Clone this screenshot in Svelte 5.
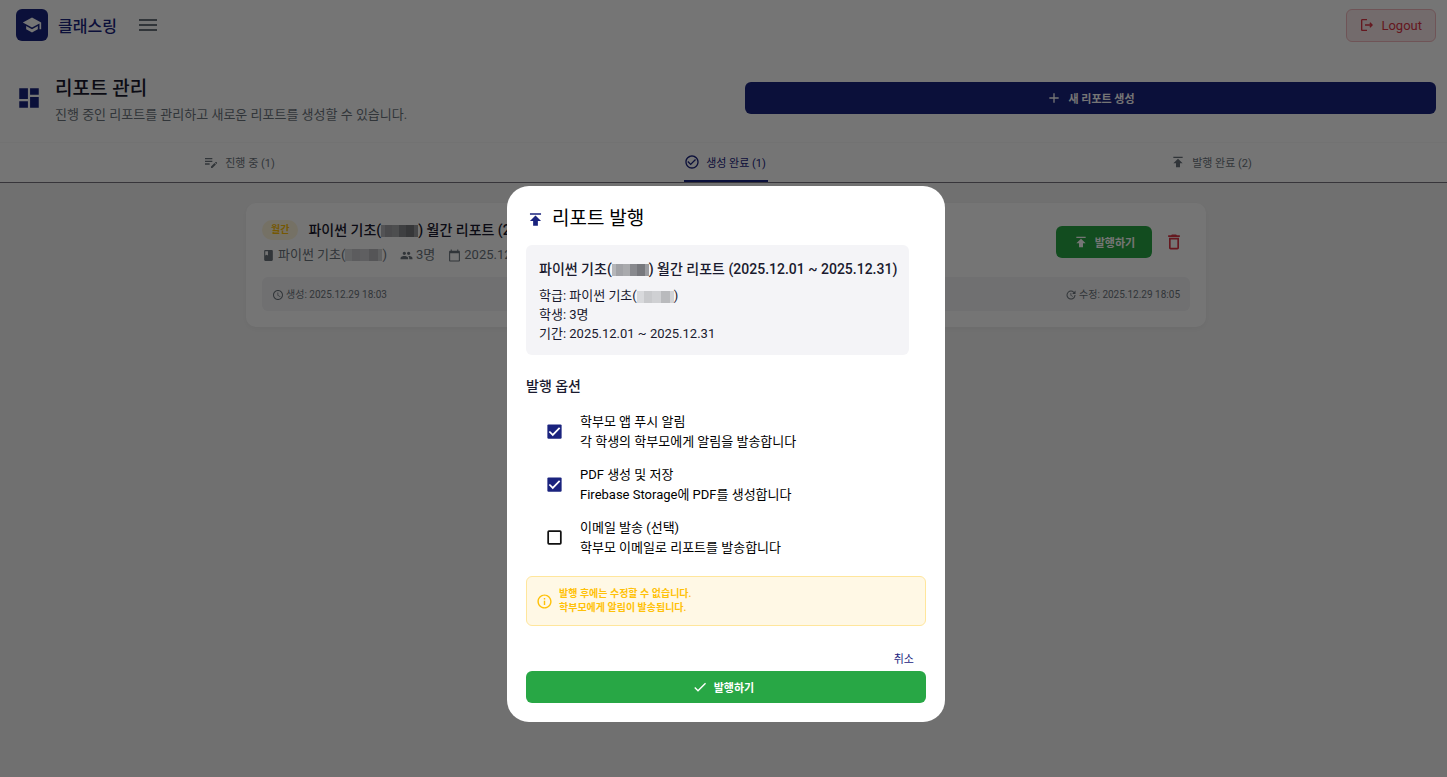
<script lang="ts">
	type Option = {
		id: string;
		title: string;
		description: string;
		checked: boolean;
	};

	const icons = {
		school: 'M5 13.18v4L12 21l7-3.82v-4L12 17l-7-3.82zM12 3L1 9l11 6 9-4.91V17h2V9L12 3z',
		menu: 'M3 18h18v-2H3v2zm0-5h18v-2H3v2zm0-7v2h18V6H3z',
		logout:
			'M17 8l-1.41 1.41L17.17 11H9v2h8.17l-1.58 1.58L17 16l4-4-4-4zM5 5h7V3H5c-1.1 0-2 .9-2 2v14c0 1.1.9 2 2 2h7v-2H5V5z',
		dashboard: 'M3 13h8V3H3v10zm0 8h8v-6H3v6zm10 0h8V11h-8v10zm0-18v6h8V3h-8z',
		add: 'M19 13h-6v6h-2v-6H5v-2h6V5h2v6h6v2z',
		editNote:
			'M3 10h11v2H3v-2zm0-2h11V6H3v2zm0 8h7v-2H3v2zm15.01-3.13.71-.71c.39-.39 1.02-.39 1.41 0l.71.71c.39.39.39 1.02 0 1.41l-.71.71-2.12-2.12zm-.71.71-5.3 5.3V21h2.12l5.3-5.3-2.12-2.12z',
		checkCircle:
			'M16.59 7.58L10 14.17l-3.59-3.58L5 12l5 5 8-8zM12 2C6.48 2 2 6.48 2 12s4.48 10 10 10 10-4.48 10-10S17.52 2 12 2zm0 18c-4.42 0-8-3.58-8-8s3.58-8 8-8 8 3.58 8 8-3.58 8-8 8z',
		publish: 'M5 4v2h14V4H5zm0 10h4v6h6v-6h4l-7-7-7 7z',
		book: 'M18 2H6c-1.1 0-2 .9-2 2v16c0 1.1.9 2 2 2h12c1.1 0 2-.9 2-2V4c0-1.1-.9-2-2-2zM6 4h5v8l-2.5-1.5L6 12V4z',
		people:
			'M16 11c1.66 0 2.99-1.34 2.99-3S17.66 5 16 5c-1.66 0-3 1.34-3 3s1.34 3 3 3zm-8 0c1.66 0 2.99-1.34 2.99-3S9.66 5 8 5C6.34 5 5 6.34 5 8s1.34 3 3 3zm0 2c-2.33 0-7 1.17-7 3.5V19h14v-2.5c0-2.33-4.67-3.5-7-3.5zm8 0c-.29 0-.62.02-.97.05 1.16.84 1.97 1.97 1.97 3.45V19h6v-2.5c0-2.33-4.67-3.5-7-3.5z',
		calendar:
			'M20 3h-1V1h-2v2H7V1H5v2H4c-1.1 0-2 .9-2 2v16c0 1.1.9 2 2 2h16c1.1 0 2-.9 2-2V5c0-1.1-.9-2-2-2zm0 18H4V8h16v13z',
		clock:
			'M11.99 2C6.47 2 2 6.48 2 12s4.47 10 9.99 10C17.52 22 22 17.52 22 12S17.52 2 11.99 2zM12 20c-4.42 0-8-3.58-8-8s3.58-8 8-8 8 3.58 8 8-3.58 8-8 8zm.5-13H11v6l5.25 3.15.75-1.23-4.5-2.67z',
		update:
			'M21 10.12h-6.78l2.74-2.82c-2.73-2.7-7.15-2.8-9.88-.1-2.73 2.71-2.73 7.08 0 9.79s7.15 2.71 9.88 0C18.32 15.65 19 14.08 19 12.1h2c0 1.98-.88 4.55-2.64 6.29-3.51 3.48-9.21 3.48-12.72 0-3.5-3.47-3.53-9.11-.02-12.58s9.14-3.47 12.65 0L21 3v7.12zM12.5 8v4.25l3.5 2.08-.72 1.21L11 13V8h1.5z',
		trash: 'M6 19c0 1.1.9 2 2 2h8c1.1 0 2-.9 2-2V7H6v12zM8 9h8v10H8V9zm7.5-5l-1-1h-5l-1 1H5v2h14V4z',
		info: 'M11 7h2v2h-2zm0 4h2v6h-2zm1-9C6.48 2 2 6.48 2 12s4.48 10 10 10 10-4.48 10-10S17.52 2 12 2zm0 18c-4.41 0-8-3.59-8-8s3.59-8 8-8 8 3.59 8 8-3.59 8-8 8z',
		check: 'M9 16.17L4.83 12l-1.42 1.41L9 19 21 7l-1.41-1.41z'
	};

	type IconName = keyof typeof icons;

	const tabs: { id: string; label: string; icon: IconName }[] = [
		{ id: 'progress', label: '진행 중 (1)', icon: 'editNote' },
		{ id: 'created', label: '생성 완료 (1)', icon: 'checkCircle' },
		{ id: 'published', label: '발행 완료 (2)', icon: 'publish' }
	];

	let activeTab = $state('created');

	let options: Option[] = $state([
		{
			id: 'push',
			title: '학부모 앱 푸시 알림',
			description: '각 학생의 학부모에게 알림을 발송합니다',
			checked: true
		},
		{
			id: 'pdf',
			title: 'PDF 생성 및 저장',
			description: 'Firebase Storage에 PDF를 생성합니다',
			checked: true
		},
		{
			id: 'email',
			title: '이메일 발송 (선택)',
			description: '학부모 이메일로 리포트를 발송합니다',
			checked: false
		}
	]);
</script>

{#snippet icon(name: IconName, size: number)}
	<svg width={size} height={size} viewBox="0 0 24 24" fill="currentColor" aria-hidden="true">
		<path d={icons[name]} />
	</svg>
{/snippet}

<div class="page">
	<header class="topbar">
		<span class="logo">{@render icon('school', 20)}</span>
		<span class="brand">클래스링</span>
		<button class="icon-button menu" aria-label="메뉴">{@render icon('menu', 24)}</button>
		<button class="logout">{@render icon('logout', 16)}Logout</button>
	</header>

	<section class="heading">
		<div class="heading-main">
			{@render icon('dashboard', 26)}
			<div class="heading-text">
				<h1>리포트 관리</h1>
				<p>진행 중인 리포트를 관리하고 새로운 리포트를 생성할 수 있습니다.</p>
			</div>
		</div>
		<button class="button create">{@render icon('add', 16)}새 리포트 생성</button>
	</section>

	<div class="tab-bar">
		<div class="tabs" role="tablist">
			{#each tabs as tab (tab.id)}
				<button
					class="tab"
					class:active={activeTab === tab.id}
					role="tab"
					aria-selected={activeTab === tab.id}
					onclick={() => (activeTab = tab.id)}
				>
					<span>{@render icon(tab.icon, 16)}{tab.label}</span>
				</button>
			{/each}
		</div>
	</div>

	<main>
		<article class="card">
			<div class="card-top">
				<div class="card-text">
					<div class="card-title">
						<span class="badge">월간</span>
						<h2>파이썬 기초(<i class="mask dark"></i>) 월간 리포트 (2025.12.01 ~ 2025.12.31)</h2>
					</div>
					<div class="meta">
						<span>{@render icon('book', 13)}파이썬 기초(<i class="mask"></i>)</span>
						<span>{@render icon('people', 13)}3명</span>
						<span>{@render icon('calendar', 13)}2025.12.01 ~ 2025.12.31</span>
					</div>
				</div>
				<button class="button publish">{@render icon('publish', 16)}발행하기</button>
				<button class="icon-button trash" aria-label="삭제">{@render icon('trash', 20)}</button>
			</div>
			<div class="dates">
				<span>{@render icon('clock', 12)}생성: 2025.12.29 18:03</span>
				<span>{@render icon('update', 12)}수정: 2025.12.29 18:05</span>
			</div>
		</article>
	</main>
</div>

<div class="overlay">
	<div class="dialog" role="dialog" aria-modal="true" aria-labelledby="dialog-title">
		<h2 id="dialog-title">{@render icon('publish', 19)}리포트 발행</h2>

		<div class="summary">
			<h3>파이썬 기초(<i class="mask dark"></i>) 월간 리포트 (2025.12.01 ~ 2025.12.31)</h3>
			<p>학급: 파이썬 기초(<i class="mask"></i>)</p>
			<p>학생: 3명</p>
			<p>기간: 2025.12.01 ~ 2025.12.31</p>
		</div>

		<fieldset>
			<legend>발행 옵션</legend>
			{#each options as option (option.id)}
				<label class="option">
					<input type="checkbox" bind:checked={option.checked} />
					<svg class="box" width="19" height="19" viewBox="0 0 24 24" aria-hidden="true">
						{#if option.checked}
							<rect x="3" y="3" width="18" height="18" rx="1.5" fill="#1a237e" />
							<path d="M5.5 12l4.3 4.3 8.7-8.8" fill="none" stroke="#fff" stroke-width="2.2" />
						{:else}
							<rect x="4" y="4" width="16" height="16" rx="1" fill="none" stroke="#111" stroke-width="2.2" />
						{/if}
					</svg>
					<span>{option.title}<br />{option.description}</span>
				</label>
			{/each}
		</fieldset>

		<div class="warning">
			{@render icon('info', 17)}
			<p>발행 후에는 수정할 수 없습니다.<br />학부모에게 알림이 발송됩니다.</p>
		</div>

		<div class="actions">
			<button class="cancel">취소</button>
			<button class="button confirm">{@render icon('check', 16)}발행하기</button>
		</div>
	</div>
</div>

<style>
	:global(body) {
		overflow: hidden;
		background: #f5f5f5;
		color: #1a1a2e;
		font-family: Roboto, 'Noto Sans CJK KR', sans-serif;
		font-size: 13px;
	}

	h1,
	h2,
	h3,
	p {
		margin: 0;
	}

	svg {
		flex: none;
	}

	button {
		padding: 0;
		border: 0;
		background: none;
		color: inherit;
		font: inherit;
		cursor: pointer;
	}

	.page {
		min-height: 100vh;
	}

	.topbar {
		display: flex;
		align-items: center;
		height: 50px;
		padding: 0 11px 0 16px;
		background: #fff;
	}

	.logo {
		display: grid;
		place-items: center;
		width: 32px;
		height: 32px;
		border-radius: 6px;
		background: #1a237e;
		color: #fff;
	}

	.brand {
		margin-left: 10px;
		color: #1a237e;
		font-size: 16px;
		font-weight: 500;
	}

	.icon-button {
		display: grid;
		place-items: center;
	}

	.menu {
		margin-left: 19px;
		color: #6c757d;
	}

	.logout {
		display: flex;
		align-items: center;
		gap: 6px;
		height: 33px;
		margin-left: auto;
		padding: 0 13px 0 12px;
		border: 1px solid #f2b8be;
		border-radius: 6px;
		background: #fbe9eb;
		color: #dc3545;
	}

	.heading {
		display: grid;
		grid-template-columns: 1fr 1fr;
		align-items: center;
		gap: 38px;
		height: 93px;
		padding: 4px 11px 0 16px;
		box-sizing: border-box;
		border-bottom: 1px solid #f8f8f8;
		background: #fff;
	}

	.heading-main {
		display: flex;
		align-items: center;
		gap: 13px;
		color: #1a237e;
	}

	.heading-text {
		padding-top: 6px;
	}

	h1 {
		color: #1a1a2e;
		font-size: 19px;
		line-height: 28px;
		font-weight: 500;
	}

	.heading-main p {
		color: #6c757d;
		line-height: 24px;
	}

	.button {
		display: flex;
		align-items: center;
		justify-content: center;
		gap: 6px;
		height: 32px;
		border-radius: 6px;
		color: #fff;
		font-size: 11px;
		font-weight: 600;
	}

	.create {
		background: #1a237e;
	}

	.tab-bar {
		overflow: hidden;
		border-bottom: 1px solid #79747e;
		background: #fff;
	}

	.tabs {
		display: grid;
		grid-template-columns: repeat(3, 1fr);
		margin: 0 -8px 0 -3px;
	}

	.tab {
		display: flex;
		justify-content: center;
		color: #6c757d;
		font-size: 11px;
	}

	.tab span {
		display: flex;
		align-items: center;
		gap: 6px;
		height: 37px;
		padding-right: 2px;
		border-bottom: 2px solid transparent;
	}

	.tab.active span {
		border-color: #1a237e;
		color: #1a237e;
	}

	main {
		padding: 20px 0 20px 5px;
	}

	.card {
		max-width: 960px;
		margin: 0 auto;
		padding: 16px;
		box-sizing: border-box;
		border-radius: 10px;
		background: #fff;
		box-shadow: 0 2px 8px rgb(0 0 0 / 5%);
	}

	.card-top {
		display: flex;
		align-items: center;
		padding-bottom: 12px;
	}

	.card-text {
		flex: 1;
	}

	.card-title {
		display: flex;
		align-items: center;
		gap: 10px;
	}

	.badge {
		padding: 0 9px;
		border-radius: 10px;
		background: #fff6dc;
		color: #ffc107;
		font-size: 10px;
		line-height: 20px;
		font-weight: 700;
	}

	.card h2 {
		font-size: 14px;
		line-height: 22px;
		font-weight: 500;
	}

	.meta {
		display: flex;
		gap: 13px;
		padding-top: 4px;
		color: #6c757d;
		line-height: 20px;
	}

	.meta span,
	.dates span {
		display: flex;
		align-items: center;
	}

	.meta svg {
		margin-right: 3px;
	}

	.dates svg {
		margin-right: 2px;
	}

	.publish {
		width: 96px;
		background: #28a745;
	}

	.trash {
		width: 32px;
		height: 32px;
		margin-left: 6px;
		color: #dc3545;
	}

	.dates {
		display: flex;
		justify-content: space-between;
		padding: 11px 10px 9px;
		border-radius: 6px;
		background: #f4f4f6;
		color: #6c757d;
		font-size: 10px;
		line-height: 14px;
	}

	/* pixelated block over a student's name */
	.mask {
		display: inline-block;
		width: 37px;
		height: 12px;
		background: linear-gradient(90deg, #d8d9dc 0 20%, #c8c9cc 20% 40%, #cfd0d3 40% 65%, #b9babd 65% 90%, #d2d3d6 90%);
		vertical-align: middle;
	}

	.mask.dark {
		background: linear-gradient(90deg, #b5b6b9 0 12%, #a1a2a6 12% 30%, #a9aaad 30% 48%, #88898e 48% 68%, #77787d 68% 88%, #9a9ba0 88%);
	}

	.overlay {
		position: fixed;
		inset: 0;
		display: flex;
		align-items: flex-start;
		justify-content: center;
		padding: 186px 0 0 5px;
		background: rgb(0 0 0 / 54%);
	}

	.dialog {
		width: 438px;
		padding: 19px;
		box-sizing: border-box;
		border-radius: 22px;
		background: #fff;
	}

	.dialog h2 {
		display: flex;
		align-items: center;
		gap: 7px;
		color: #000;
		font-size: 19px;
		line-height: 28px;
		font-weight: 400;
	}

	.dialog h2 svg {
		color: #1a237e;
	}

	.summary {
		width: fit-content;
		margin-top: 12px;
		padding: 13px 12px 12px 13px;
		border-radius: 6px;
		background: #f4f4f7;
		line-height: 19px;
	}

	.summary h3 {
		padding-bottom: 6px;
		font-size: 14px;
		line-height: 22px;
		font-weight: 500;
	}

	fieldset {
		min-width: 0;
		margin: 0;
		padding: 0;
		border: 0;
	}

	legend {
		padding: 20px 0 8px;
		font-size: 14px;
		line-height: 22px;
		font-weight: 500;
	}

	.option {
		position: relative;
		display: flex;
		align-items: center;
		gap: 16px;
		height: 53px;
		padding-left: 19px;
		color: #000;
		line-height: 20px;
		cursor: pointer;
	}

	.option input {
		position: absolute;
		width: 19px;
		height: 19px;
		margin: 0;
		opacity: 0;
	}

	.warning {
		display: flex;
		align-items: center;
		gap: 6px;
		margin-top: 12px;
		padding: 10px 9px;
		border: 1px solid #ffe69c;
		border-radius: 6px;
		background: #fff8e5;
		color: #ffc107;
		font-size: 10px;
		line-height: 14px;
		font-weight: 600;
	}

	.actions {
		display: flex;
		flex-direction: column;
		padding-top: 23px;
	}

	.cancel {
		align-self: flex-end;
		padding: 0 12px;
		color: #1a237e;
		font-size: 11px;
		line-height: 22px;
	}

	.confirm {
		padding-right: 6px;
		background: #28a745;
	}
</style>
